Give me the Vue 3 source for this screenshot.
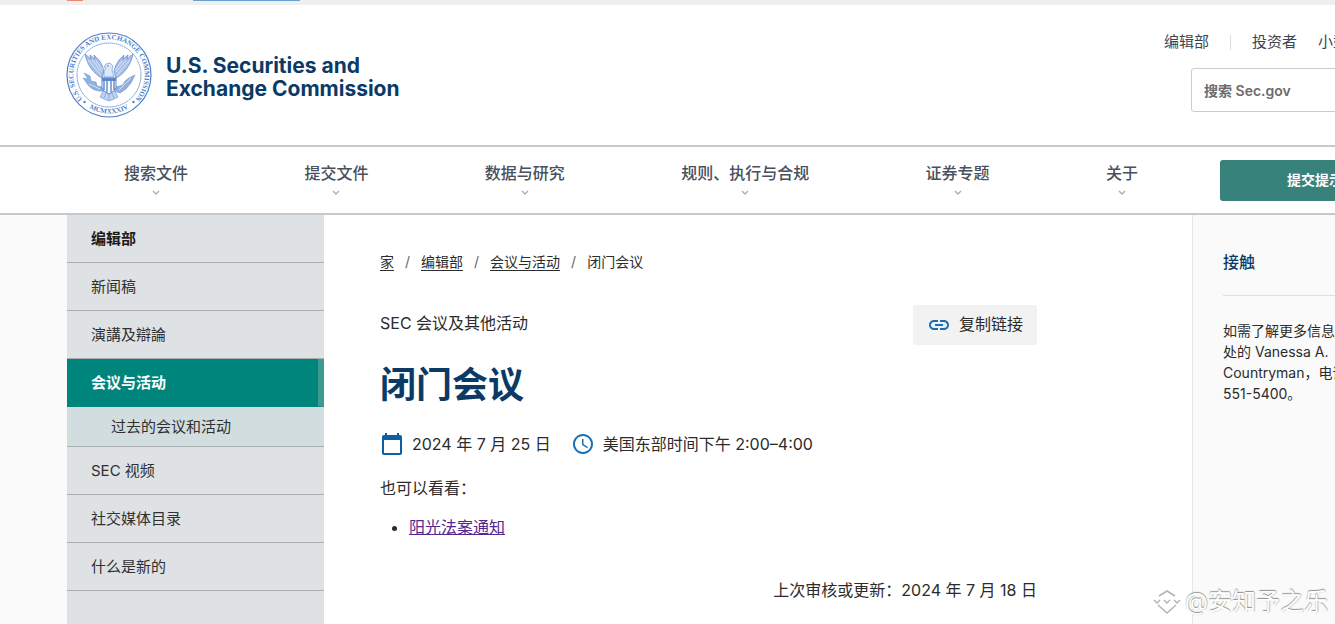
<template>
  <div class="page">
    <div class="top-strip">
      <span class="strip-mark red"></span>
      <span class="strip-mark blue"></span>
    </div>

    <header class="site-header">
      <a href="#" class="brand">
        <svg class="seal" viewBox="0 0 86 86" aria-hidden="true">
          <defs>
            <path id="seal-top" d="M 20.700 70.900 A 35.700 35.700 0 1 1 65.300 70.900" />
            <path id="seal-bottom" d="M 18 72.300 A 38.600 38.600 0 0 0 68 72.300" />
          </defs>
          <circle cx="43" cy="43" r="42" fill="none" stroke="#4f7fc9" stroke-width="1.2" />
          <circle cx="43" cy="43" r="32" fill="none" stroke="#6f97d6" stroke-width="1" stroke-dasharray="1.6 0.5" />
          <text class="seal-text">
            <textPath href="#seal-top" startOffset="50%" text-anchor="middle">U.S. SECURITIES AND EXCHANGE COMMISSION</textPath>
          </text>
          <text class="seal-text">
            <textPath href="#seal-bottom" startOffset="50%" text-anchor="middle">MCMXXXIV</textPath>
          </text>
          <circle cx="18.500" cy="70" r="1.2" fill="#4f7fc9" />
          <circle cx="67.500" cy="70" r="1.2" fill="#4f7fc9" />
          <!-- wings -->
          <g fill="#a9c1e8" stroke="#5d87cc" stroke-width="0.7">
            <path d="M36 46 C28 42 21 33 19 22 L25 27 L24 23 L29 27 L28 23 L33 28 L36 33 L38 39 Z" />
            <path d="M50 46 C58 42 65 33 67 22 L61 27 L62 23 L57 27 L58 23 L53 28 L50 33 L48 39 Z" />
          </g>
          <g fill="none" stroke="#e4edfa" stroke-width="0.8">
            <path d="M22 28 L35 43 M26 28 L36 40 M30 29 L37 38" />
            <path d="M64 28 L51 43 M60 28 L50 40 M56 29 L49 38" />
          </g>
          <!-- head and neck -->
          <path d="M38 45 L38 39 L40 36 L38 35 L40 32 L44 31 L47 34 L46 38 L48 45 Z" fill="#dce7f8" stroke="#6f97d6" stroke-width="0.7" />
          <circle cx="42" cy="34" r="0.7" fill="#3566b5" />
          <!-- tail -->
          <path d="M39 56 L34 65 L38 67 L43 69 L48 67 L52 65 L47 56 Z" fill="#bfd2ef" stroke="#6f97d6" stroke-width="0.7" />
          <path d="M41 59 L38 66 M43 59 L43 68 M45 59 L48 66" stroke="#6f97d6" stroke-width="0.6" />
          <!-- olive branch and arrows -->
          <g fill="#8fb0e0" stroke="#6f97d6" stroke-width="0.6">
            <path d="M38 59 C31 60 24 57 20 50 L17 46 L22 47 L18 41 L24 44 L25 49 L30 50 L31 54 L36 55 Z" />
            <path d="M48 59 L54 61 L60 57 L65 51 L69 43 L63 46 L59 49 L57 53 L50 55 Z" />
          </g>
          <path d="M23 52 L34 57 M53 58 L65 46" stroke="#e4edfa" stroke-width="0.8" />
          <!-- shield -->
          <path d="M36 46 H50 V56 Q48 60 43 62 Q38 60 36 56 Z" fill="#fff" stroke="#3566b5" stroke-width="0.8" />
          <path d="M36 46 H50 V49 H36 Z" fill="#5d87cc" />
          <path d="M38 49 V58 M41 49 V60 M45 49 V60 M48 49 V58" stroke="#4273c0" stroke-width="1.2" />
        </svg>
        <span class="brand-name">U.S. Securities and<br />Exchange Commission</span>
      </a>

      <div class="header-tools">
        <nav class="tool-links">
          <a href="#">编辑部</a>
          <span class="divider"></span>
          <a href="#">投资者</a>
          <a href="#">小型</a>
        </nav>
        <input class="search" type="search" placeholder="搜索 Sec.gov" aria-label="搜索 Sec.gov" />
      </div>
    </header>

    <div class="main-nav">
      <nav class="nav-items">
        <a v-for="item in navItems" :key="item" href="#" class="nav-item">
          <span>{{ item }}</span>
          <svg class="chevron" viewBox="0 0 8 5" aria-hidden="true">
            <path d="M1 1 L4 4 L7 1" fill="none" stroke="#a9aeb1" stroke-width="1.4" />
          </svg>
        </a>
      </nav>
      <button type="button" class="btn-tip">提交提示</button>
    </div>

    <div class="content">
      <nav class="sidebar">
        <a
          v-for="item in sideItems"
          :key="item.label"
          href="#"
          class="side-item"
          :class="item.type"
        >{{ item.label }}</a>
      </nav>

      <main class="article">
        <nav class="breadcrumb">
          <template v-for="crumb in crumbs" :key="crumb">
            <a href="#">{{ crumb }}</a>
            <span class="slash">/</span>
          </template>
          <span>闭门会议</span>
        </nav>

        <div class="article-top">
          <span class="eyebrow">SEC 会议及其他活动</span>
          <button type="button" class="btn-copy">
            <svg class="link-icon" viewBox="0 0 24 24" aria-hidden="true">
              <path d="M3.900 12c0-1.710 1.390-3.100 3.100-3.100h4V7H7c-2.760 0-5 2.240-5 5s2.240 5 5 5h4v-1.900H7c-1.710 0-3.100-1.390-3.100-3.100zM8 13h8v-2H8v2zm9-6h-4v1.900h4c1.710 0 3.100 1.390 3.100 3.100s-1.390 3.100-3.100 3.100h-4V17h4c2.760 0 5-2.240 5-5s-2.240-5-5-5z" fill="#1a6fb5" />
            </svg>
            <span>复制链接</span>
          </button>
        </div>

        <h1 class="title">闭门会议</h1>

        <div class="meta">
          <span class="meta-item">
            <svg class="meta-icon" viewBox="0 0 24 24" aria-hidden="true">
              <path d="M20 3h-1V1h-2v2H7V1H5v2H4c-1.100 0-2 .9-2 2v16c0 1.100.9 2 2 2h16c1.100 0 2-.9 2-2V5c0-1.100-.9-2-2-2zm0 18H4V8h16v13z" fill="#0b5fa5" />
            </svg>
            <span>2024 年 7 月 25 日</span>
          </span>
          <span class="meta-item">
            <svg class="meta-icon" viewBox="0 0 24 24" aria-hidden="true">
              <path d="M11.990 2C6.470 2 2 6.480 2 12s4.470 10 9.990 10C17.520 22 22 17.520 22 12S17.520 2 11.990 2zM12 20c-4.420 0-8-3.580-8-8s3.580-8 8-8 8 3.580 8 8-3.580 8-8 8zm.5-13H11v6l5.250 3.150.75-1.230-4.500-2.670V7z" fill="#1a6fb5" />
            </svg>
            <span>美国东部时间下午 2:00–4:00</span>
          </span>
        </div>

        <p class="see-also">也可以看看：</p>
        <ul class="links">
          <li><a href="#">阳光法案通知</a></li>
        </ul>

        <p class="updated">
          <span>上次审核或更新：</span>
          <span>2024 年 7 月 18 日</span>
        </p>
      </main>

      <aside class="contact">
        <h2>接触</h2>
        <p>
          如需了解更多信息<br />
          处的 Vanessa A.<br />
          Countryman，电话<br />
          551-5400。
        </p>
      </aside>
    </div>

    <div class="watermark">
      <svg class="watermark-icon" viewBox="0 0 28 24" aria-hidden="true">
        <path d="M6 6 L14 1 L22 6 M1 10 L4 13 L7 10 M11 10 L14 13 L17 10 M21 10 L24 13 L27 10 M5 15 L14 23 L23 15" fill="none" stroke="#b4b4b4" stroke-width="1.500" />
      </svg>
      <span>@安知予之乐</span>
    </div>
  </div>
</template>

<script setup>
const navItems = ['搜索文件', '提交文件', '数据与研究', '规则、执行与合规', '证券专题', '关于']

const sideItems = [
  { label: '编辑部', type: 'heading' },
  { label: '新闻稿' },
  { label: '演講及辯論' },
  { label: '会议与活动', type: 'active' },
  { label: '过去的会议和活动', type: 'sub' },
  { label: 'SEC 视频' },
  { label: '社交媒体目录' },
  { label: '什么是新的' }
]

const crumbs = ['家', '编辑部', '会议与活动']
</script>

<style>
body {
  background: #fff;
}
</style>

<style scoped>
.page {
  position: relative;
  min-height: 100vh;
  display: flex;
  flex-direction: column;
  overflow: hidden;
  color: #2b2b2b;
  font-family: Inter, "Noto Sans CJK SC", sans-serif;
  font-size: 16px;
}

.page * {
  box-sizing: border-box;
}

a {
  color: inherit;
  text-decoration: none;
}

.top-strip {
  display: flex;
  gap: 110px;
  height: 5px;
  padding-left: 67px;
  background: #efefef;
}

.strip-mark {
  height: 1px;
}

.strip-mark.red {
  width: 16px;
  background: #ee8777;
}

.strip-mark.blue {
  width: 107px;
  background: #68a2d2;
}

/* Header */
.site-header {
  display: flex;
  justify-content: space-between;
  padding: 27px 0;
  border-bottom: 2px solid #c8c8c8;
}

.brand {
  display: flex;
  align-items: center;
  gap: 14px;
  padding-left: 66px;
}

.seal {
  width: 86px;
  height: 86px;
}

.seal-text {
  font-family: "Liberation Serif", serif;
  font-size: 7px;
  font-weight: 700;
  fill: #4f7fc9;
}

.brand-name {
  padding-top: 3px;
  color: #0b3a66;
  font-size: 21px;
  font-weight: 700;
  line-height: 23px;
  white-space: nowrap;
}

.header-tools {
  width: 171px;
}

.tool-links {
  display: flex;
  align-items: center;
  gap: 21px;
  height: 20px;
  color: #3d4551;
  font-size: 15px;
  line-height: 20px;
  white-space: nowrap;
}

.divider {
  flex: none;
  width: 1px;
  height: 15px;
  background: #dcdee0;
}

.search {
  display: block;
  width: 240px;
  height: 44px;
  margin: 16px 0 0 27px;
  padding: 0 12px;
  border: 1px solid #c9ccd1;
  border-radius: 3px;
  background: #fff;
  font: 600 14px Inter, "Noto Sans CJK SC", sans-serif;
}

.search::placeholder {
  color: #6b6b6b;
  opacity: 1;
}

/* Navigation */
.main-nav {
  display: flex;
  align-items: center;
  height: 68px;
  border-bottom: 2px solid #c8c8c8;
}

.nav-items {
  flex: 1;
  display: flex;
  justify-content: space-between;
  padding: 0 82px 4px 124px;
}

.nav-item {
  display: flex;
  flex-direction: column;
  align-items: center;
  gap: 5px;
  color: #47505c;
  font-weight: 500;
  line-height: 24px;
}

.chevron {
  width: 8px;
  height: 5px;
}

.btn-tip {
  width: 115px;
  height: 41px;
  padding: 0 0 2px 67px;
  overflow: hidden;
  border: none;
  border-radius: 3px 0 0 3px;
  background: #38827c;
  color: #fff;
  font: 700 14px Inter, "Noto Sans CJK SC", sans-serif;
  text-align: left;
  white-space: nowrap;
}

/* Page body */
.content {
  flex: 1;
  display: grid;
  grid-template-columns: 257px 1fr 143px;
  padding-left: 67px;
  background: #fafafa;
}

.sidebar {
  background: #dfe2e5;
}

.side-item {
  display: flex;
  align-items: center;
  height: 48px;
  padding: 0 0 3px 24px;
  border-bottom: 1px solid #a9aeb1;
  color: #303030;
  font-size: 15px;
}

.side-item.heading {
  color: #1b1b1b;
  font-weight: 700;
}

.side-item.active {
  border-right: 6px solid #3f9a92;
  border-bottom-color: #00857c;
  background: #00857c;
  color: #fff;
  font-weight: 700;
}

.side-item.sub {
  height: 40px;
  padding-left: 44px;
  background: #d1dddf;
}

.article {
  padding: 37px 155px 22px 56px;
  background: #fff;
}

.breadcrumb {
  display: flex;
  gap: 11px;
  font-size: 14px;
  line-height: 20px;
}

.breadcrumb a {
  height: 19px;
  border-bottom: 1px solid #2b2b2b;
}

.slash {
  color: #666;
}

.article-top {
  display: flex;
  justify-content: space-between;
  margin-top: 33px;
}

.eyebrow {
  line-height: 36px;
}

.btn-copy {
  display: flex;
  align-items: center;
  gap: 8px;
  height: 40px;
  padding: 0 14px;
  border: none;
  border-radius: 2px;
  background: #f2f2f2;
  color: #2b2b2b;
  font: 16px/24px Inter, "Noto Sans CJK SC", sans-serif;
}

.btn-copy span {
  padding-bottom: 3px;
}

.link-icon {
  width: 24px;
  height: 24px;
}

.title {
  margin: 18px 0 0;
  color: #0b3a66;
  font-size: 36px;
  font-weight: 700;
  line-height: 44px;
}

.meta {
  display: flex;
  gap: 20px;
  margin-top: 25px;
  line-height: 24px;
}

.meta-item {
  display: flex;
  align-items: center;
  gap: 8px;
}

.meta-icon {
  width: 24px;
  height: 24px;
}

.see-also {
  margin: 20px 0 0;
  line-height: 24px;
}

.links {
  margin: 15px 0 0;
  padding-left: 29px;
  line-height: 24px;
}

.links a {
  color: #54278f;
  text-decoration: underline;
}

.updated {
  display: flex;
  justify-content: flex-end;
  margin: 39px 0 0;
  line-height: 24px;
}

.contact {
  padding: 35px 0 0 30px;
  overflow: hidden;
  border-left: 1px solid #e6e6e6;
  white-space: nowrap;
}

.contact h2 {
  margin: 0;
  padding-bottom: 21px;
  border-bottom: 1px solid #e0e0e0;
  color: #0b3a66;
  font-size: 16px;
  font-weight: 500;
  line-height: 24px;
}

.contact p {
  margin: 24px 0 0;
  font-size: 14px;
  line-height: 21px;
}

.watermark {
  position: absolute;
  right: 7px;
  bottom: 6px;
  display: flex;
  align-items: center;
  gap: 4px;
  color: #fff;
  font-size: 24px;
  line-height: 32px;
  text-shadow: 0 -1px 1px #8f8f8f, 1px 0 1px #c4c4c4;
}

.watermark-icon {
  width: 28px;
  height: 24px;
}
</style>
